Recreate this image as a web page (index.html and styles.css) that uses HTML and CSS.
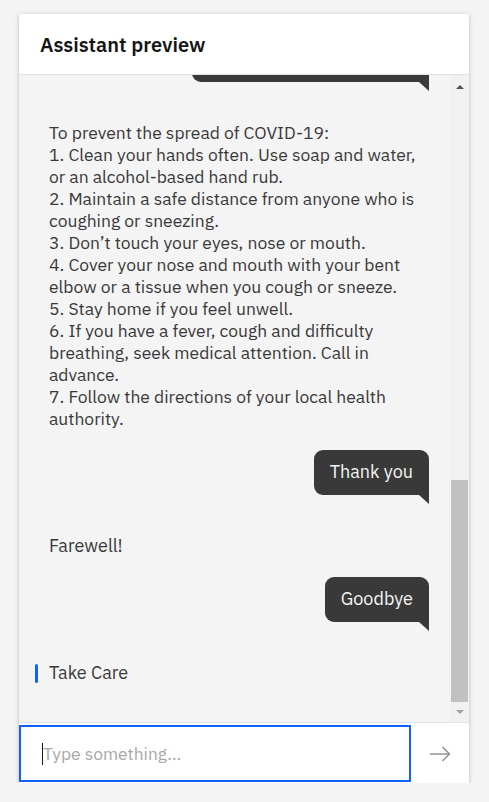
FILE: index.html
```html
<!DOCTYPE html>
<html lang="en">
<head>
<meta charset="utf-8">
<title>Assistant preview</title>
<link rel="stylesheet" href="styles.css">
</head>
<body>
<div class="card">
  <header class="card-header">Assistant preview</header>
  <div class="card-body">
    <div class="messages">
      <div class="bubble bubble-first"></div>
      <div class="bot bot-list">To prevent the spread of COVID-19:<br>1. Clean your hands often. Use soap and water, or an alcohol-based hand rub.<br>2. Maintain a safe distance from anyone who is coughing or sneezing.<br>3. Don’t touch your eyes, nose or mouth.<br>4. Cover your nose and mouth with your bent elbow or a tissue when you cough or sneeze.<br>5. Stay home if you feel unwell.<br>6. If you have a fever, cough and difficulty breathing, seek medical attention. Call in advance.<br>7. Follow the directions of your local health authority.</div>
      <div class="bubble">Thank you</div>
      <div class="bot">Farewell!</div>
      <div class="bubble">Goodbye</div>
      <div class="bot bot-focused"><span class="focus-bar"></span><span>Take Care</span></div>
    </div>
    <div class="scrollbar">
      <div class="sb-btn"><span class="sb-up"></span></div>
      <div class="sb-track"><div class="sb-thumb"></div></div>
      <div class="sb-btn sb-btn-down"><span class="sb-down"></span></div>
    </div>
  </div>
  <footer class="card-footer">
    <input class="chat-input" type="text" placeholder="Type something…">
    <button class="send" type="button" aria-label="Send">
      <svg width="22" height="16" viewBox="0 0 22 16" fill="none" stroke="#8d8d8d" stroke-width="1.4">
        <path d="M1 8H20.5"/>
        <path d="M13.5 1L20.5 8L13.5 15"/>
      </svg>
    </button>
  </footer>
</div>
</body>
</html>
```
FILE: styles.css
```css
* { box-sizing: border-box; }
html, body { margin: 0; padding: 0; }
body {
  background: #f4f4f4;
  font-family: "IBM Plex Sans", "Open Sans", "Noto Sans", sans-serif;
  padding: 14px 20px 0 19px;
}
.card {
  width: 450px;
  background: #f4f4f4;
  box-shadow: 0 1px 4px rgba(0,0,0,0.25);
  display: flex;
  flex-direction: column;
}
.card-header {
  height: 61px;
  background: #fff;
  border-bottom: 1px solid #e0e0e0;
  padding-left: 21px;
  display: flex;
  align-items: center;
  font-size: 20px;
  font-weight: 600;
  color: #161616;
}
.card-body {
  height: 647px;
  display: flex;
  background: #f4f4f4;
}
.messages {
  flex: 1;
  overflow: hidden;
  display: flex;
  flex-direction: column;
  padding: 0 22px 0 30px;
}
.bubble {
  position: relative;
  align-self: flex-end;
  background: #393939;
  color: #f4f4f4;
  font-size: 18px;
  font-weight: 400;
  line-height: 22px;
  padding: 11px 16px 12px;
  border-radius: 9px 9px 0 9px;
  margin-top: 20px;
  white-space: nowrap;
}
.bubble::after {
  content: "";
  position: absolute;
  right: 0;
  top: 100%;
  width: 10px;
  height: 9px;
  background: #393939;
  clip-path: polygon(0 0, 100% 0, 100% 100%);
}
.bubble-first {
  margin-top: -38px;
  width: 237px;
  height: 45px;
}
.bot {
  margin-top: 40px;
  font-size: 18px;
  line-height: 22px;
  color: #393939;
}
.bot-list {
  font-size: 17.5px;
}
.bot-focused {
  margin-left: -14px;
  display: flex;
  align-items: center;
  gap: 11px;
}
.focus-bar {
  width: 3px;
  height: 19px;
  background: #0f62fe;
  border-radius: 2px;
}
.scrollbar {
  width: 17px;
  margin-right: 1px;
  display: flex;
  flex-direction: column;
  background: #f1f1f1;
}
.sb-btn {
  height: 20px;
  display: flex;
  align-items: center;
  justify-content: center;
  padding-top: 4px;
}
.sb-btn-down { padding-top: 0; }
.sb-up {
  width: 0; height: 0;
  border-left: 4px solid transparent;
  border-right: 4px solid transparent;
  border-bottom: 4px solid #505050;
}
.sb-down {
  width: 0; height: 0;
  border-left: 4px solid transparent;
  border-right: 4px solid transparent;
  border-top: 4px solid #a3a3a3;
}
.sb-track {
  flex: 1;
  display: flex;
  flex-direction: column;
  justify-content: flex-end;
}
.sb-thumb {
  height: 222px;
  background: #c1c1c1;
}
.card-footer {
  height: 61px;
  background: #fff;
  border-top: 1px solid #dde3ee;
  display: flex;
  padding: 2px 0 1px;
}
.chat-input {
  width: 392px;
  height: 57px;
  border: 2px solid #0f62fe;
  outline: none;
  padding: 0 0 0 22px;
  font-family: inherit;
  font-size: 17.4px;
  color: #161616;
  background: #fff linear-gradient(#161616, #161616) no-repeat 21px center / 1px 22px;
}
.chat-input::placeholder { color: #a8a8a8; }
.send {
  flex: 1;
  border: 0;
  background: #fff;
  padding: 0;
  display: flex;
  align-items: center;
  justify-content: center;
}
```
